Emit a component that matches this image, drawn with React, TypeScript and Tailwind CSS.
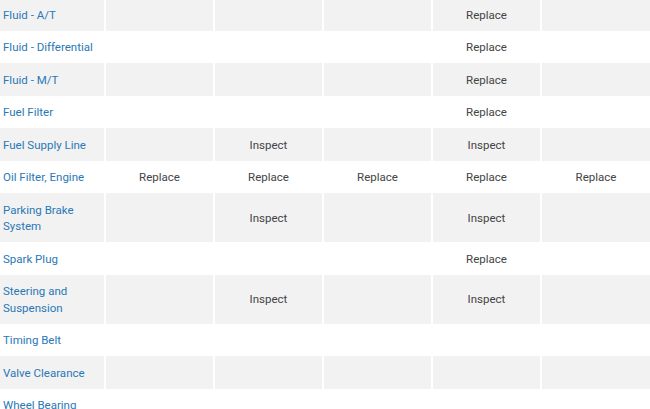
import React from 'react';

type Row = { name: string; cells: string[] };

const rows: Row[] = [
  { name: 'Fluid - A/T', cells: ['', '', '', 'Replace', ''] },
  { name: 'Fluid - Differential', cells: ['', '', '', 'Replace', ''] },
  { name: 'Fluid - M/T', cells: ['', '', '', 'Replace', ''] },
  { name: 'Fuel Filter', cells: ['', '', '', 'Replace', ''] },
  { name: 'Fuel Supply Line', cells: ['', 'Inspect', '', 'Inspect', ''] },
  { name: 'Oil Filter, Engine', cells: ['Replace', 'Replace', 'Replace', 'Replace', 'Replace'] },
  { name: 'Parking Brake System', cells: ['', 'Inspect', '', 'Inspect', ''] },
  { name: 'Spark Plug', cells: ['', '', '', 'Replace', ''] },
  { name: 'Steering and Suspension', cells: ['', 'Inspect', '', 'Inspect', ''] },
  { name: 'Timing Belt', cells: ['', '', '', '', ''] },
  { name: 'Valve Clearance', cells: ['', '', '', '', ''] },
  { name: 'Wheel Bearing', cells: ['', '', '', '', ''] },
];

export default function App() {
  return (
    <div className="h-[409px] w-[650px] overflow-hidden bg-white font-['Roboto',sans-serif] text-[11.5px] leading-[16.5px]">
      <table className="-mt-[2px] w-[650px] table-fixed border-collapse">
        <colgroup>
          <col className="w-[105px]" />
          <col />
          <col />
          <col />
          <col />
          <col />
        </colgroup>
        <tbody>
          {rows.map((r, i) => (
            <tr key={r.name} className={i % 2 === 0 ? 'bg-[#f2f2f2]' : 'bg-white'}>
              <td className="pt-[8.5px] pb-[7.5px] pl-[3px] pr-[6px] align-middle text-[#2a78b6]">{r.name}</td>
              {r.cells.map((c, j) => (
                <td
                  key={j}
                  className="border-l-2 border-white pt-[8.5px] pb-[7.5px] text-center align-middle text-[#444]"
                >
                  {c}
                </td>
              ))}
            </tr>
          ))}
        </tbody>
      </table>
    </div>
  );
}
